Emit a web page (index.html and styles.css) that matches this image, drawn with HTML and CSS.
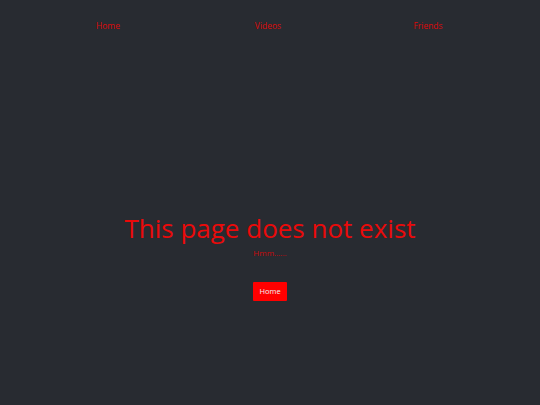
FILE: index.html
```html
<!DOCTYPE html>
<html>
<head>
<meta charset="utf-8">
<link rel="stylesheet" href="styles.css">
</head>
<body>
<nav class="nav">
  <a class="nav-link" href="#">Home</a>
  <a class="nav-link" href="#">Videos</a>
  <a class="nav-link" href="#">Friends</a>
</nav>
<main class="main">
  <h1 class="title">This page does not exist</h1>
  <p class="sub">Hmm......</p>
  <a class="btn" href="#">Home</a>
</main>
</body>
</html>
```
FILE: styles.css
```css
html, body {
  margin: 0;
  padding: 0;
  height: 100%;
}
body {
  background: #282b31;
  font-family: "Open Sans", "Noto Sans", sans-serif;
  color: #e00000;
}
.nav {
  display: grid;
  grid-template-columns: repeat(3, 160px);
  padding: 19px 0 0 28px;
  height: 19px;
}
.nav-link {
  text-align: center;
  color: #dc0a0a;
  font-size: 8.5px;
  text-decoration: none;
  line-height: 14px;
}
.main {
  display: flex;
  flex-direction: column;
  align-items: center;
  padding-top: 172px;
}
.title {
  margin: 0;
  font-weight: 400;
  font-size: 26px;
  line-height: 36px;
  color: #ea0a0a;
}
.sub {
  margin: 1px 0 0;
  font-size: 8px;
  line-height: 12px;
  color: #c80a0a;
}
.btn {
  margin-top: 23px;
  background: #ff0000;
  color: #f2f2f2;
  font-size: 7.5px;
  text-decoration: none;
  padding: 0 6px;
  line-height: 19px;
  border-radius: 1px;
}
```
